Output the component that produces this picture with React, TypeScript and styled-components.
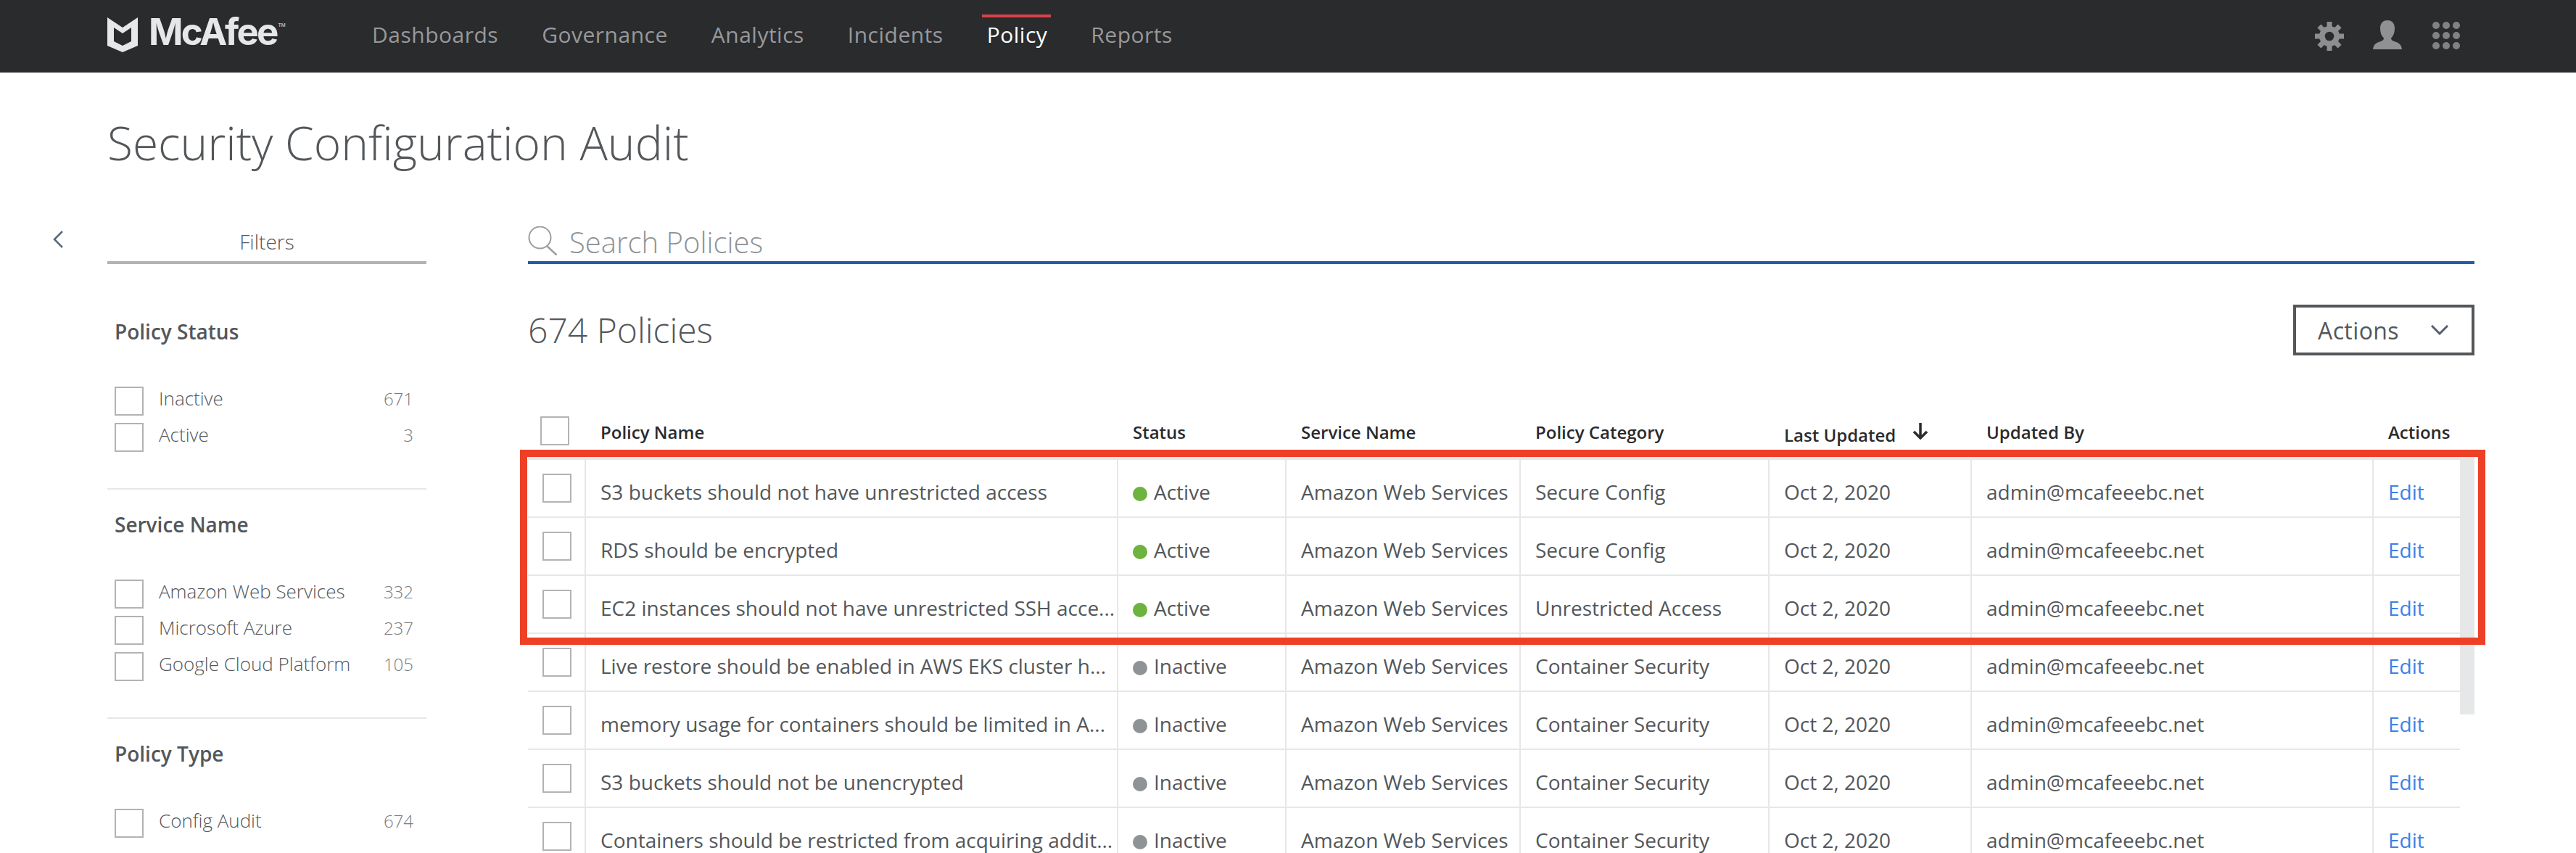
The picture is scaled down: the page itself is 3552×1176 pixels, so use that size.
import React from "react";
import styled, { createGlobalStyle } from "styled-components";

const Global = createGlobalStyle`
  html, body { margin: 0; padding: 0; background: #fff; height: 1176px; overflow: hidden; }
  body { font-family: "Open Sans", "Liberation Sans", sans-serif; color: #53575a; }
  * { box-sizing: border-box; }
`;

const TopBar = styled.header`
  height: 100px;
  background: #2a2b2d;
  display: flex;
  align-items: center;
  padding: 0 160px 0 148px;
`;
const Logo = styled.div`
  display: flex;
  align-items: flex-start;
  flex: none;
  width: 365px;
  height: 48px;
  margin-top: -4px;
  color: #e6e7e8;
`;
const ShieldMark = styled.svg`
  flex: none;
`;
const LogoWord = styled.span`
  font-family: Inter, "Liberation Sans", sans-serif;
  font-weight: 700;
  font-size: 51px;
  line-height: 40px;
  letter-spacing: -2.8px;
  margin-left: 15px;
`;
const LogoMark = styled.span`
  font-family: "Liberation Sans", sans-serif;
  font-size: 7px;
  line-height: 10px;
  margin: 6px 0 0 2px;
`;
const Nav = styled.nav`
  display: flex;
  flex: 1;
  gap: 60px;
  height: 100px;
`;
const NavItem = styled.a<{ $active?: boolean }>`
  font-size: 30px;
  letter-spacing: 0.5px;
  line-height: 96px;
  color: ${(p) => (p.$active ? "#ffffff" : "#98999b")};
  position: relative;
  &::before {
    content: "";
    display: ${(p) => (p.$active ? "block" : "none")};
    position: absolute;
    left: -7px;
    right: -5px;
    top: 20px;
    height: 4px;
    background: #d8434b;
  }
`;
const TopIcons = styled.div`
  display: flex;
  align-items: center;
  gap: 40px;
  margin-top: -4px;
`;
const GearIcon = styled.svg`
  margin-top: 4px;
`;
const AppsIcon = styled.svg`
  margin: 2px 0 0 2px;
`;

const PageTitle = styled.h1`
  margin: 53px 0 71px 148px;
  font-size: 64px;
  line-height: 88px;
  font-weight: 300;
  color: #53575a;
`;
const Columns = styled.div`
  display: flex;
`;
const Collapse = styled.div`
  flex: none;
  padding: 6px 0 0 72px;
  width: 148px;
`;
const Sidebar = styled.aside`
  flex: none;
  width: 440px;
`;
const MainCol = styled.main`
  flex: none;
  width: 2684px;
  margin-left: 140px;
`;
const FiltersTab = styled.div`
  height: 52px;
  border-bottom: 4px solid #b1b3b5;
  text-align: center;
  font-size: 28px;
  font-weight: 300;
  line-height: 42px;
  color: #53575a;
`;
const FilterGroup = styled.section<{ $first?: boolean }>`
  padding: ${(p) => (p.$first ? "73px" : "28px")} 18px 50px 10px;
  border-bottom: 2px solid #e6e7e8;
`;
const FilterHeading = styled.h3`
  margin: 0 0 56px;
  font-size: 28px;
  line-height: 40px;
  font-weight: 600;
  color: #53575a;
`;
const FilterOption = styled.div`
  display: flex;
  align-items: center;
  height: 40px;
  margin-top: 10px;
  font-size: 26px;
  font-weight: 300;
  color: #53575a;
`;
const OptionLabel = styled.span`
  flex: 1;
  margin-left: 21px;
  margin-top: -8px;
`;
const OptionCount = styled.span`
  color: #797c7f;
  font-size: 24px;
  margin-top: -8px;
`;
const Check = styled.span`
  display: block;
  flex: none;
  width: 40px;
  height: 40px;
  border: 2px solid #b1b3b5;
  background: #fff;
`;

const SearchBar = styled.div`
  height: 52px;
  border-bottom: 4px solid #225ea8;
  display: flex;
  align-items: flex-start;
  gap: 17px;
`;
const SearchGlass = styled.svg`
  flex: none;
`;
const SearchText = styled.span`
  font-size: 40px;
  font-weight: 300;
  line-height: 44px;
  color: #8f9396;
`;
const Toolbar = styled.div`
  display: flex;
  align-items: center;
  justify-content: space-between;
  margin-top: 56px;
  height: 70px;
`;
const Count = styled.h2`
  margin: 0;
  font-size: 48px;
  font-weight: 300;
  color: #53575a;
  line-height: 66px;
`;
const ActionsButton = styled.button`
  width: 250px;
  height: 70px;
  border: 4px solid #53575a;
  background: #fff;
  display: flex;
  align-items: center;
  justify-content: space-between;
  padding: 0 32px 0 30px;
  font-family: inherit;
  font-size: 32px;
  letter-spacing: 0.4px;
  color: #53575a;
`;
const TableWrap = styled.div`
  position: relative;
  margin-top: 80px;
`;
const COLS = "80px 734px 232px 323px 343px 279px 554px 119px";
const HeadRow = styled.div`
  display: grid;
  grid-template-columns: ${COLS};
  width: 2664px;
  height: 60px;
`;
const HeadCell = styled.div<{ $low?: boolean }>`
  padding: ${(p) => (p.$low ? "16px" : "12px")} 0 0 20px;
  font-size: 24px;
  line-height: 28px;
  font-weight: 600;
  color: #2a2b2d;
  display: flex;
  align-items: flex-start;
`;
const HeadCheck = styled.div`
  padding: 4px 0 0 17px;
`;
const SortArrow = styled.svg`
  margin: -4px 0 0 22px;
`;
const TableBody = styled.div`
  width: 2664px;
  border-top: 4px solid #e6e7e8;
`;
const Row = styled.div`
  display: grid;
  grid-template-columns: ${COLS};
  height: 80px;
  border-bottom: 2px solid #e6e7e8;
`;
const Cell = styled.div<{ $last?: boolean }>`
  border-right: ${(p) => (p.$last ? "none" : "2px solid #e6e7e8")};
  padding: 15px 0 0 20px;
  font-size: 28px;
  line-height: 58px;
  color: #53575a;
  white-space: nowrap;
`;
const CheckCell = styled.div`
  border-right: 2px solid #e6e7e8;
  padding: 19px 0 0 20px;
`;
const StatusDot = styled.span<{ $active: boolean }>`
  display: inline-block;
  width: 20px;
  height: 20px;
  border-radius: 50%;
  margin-right: 9px;
  vertical-align: -2px;
  background: ${(p) => (p.$active ? "#6db33f" : "#8e9396")};
`;
const EditLink = styled.a`
  color: #3f7fe8;
`;
const ScrollThumb = styled.div`
  position: absolute;
  right: 0;
  top: 60px;
  width: 20px;
  height: 355px;
  background: #e6e7e8;
`;
const Highlight = styled.div`
  position: absolute;
  left: -11px;
  right: -15px;
  top: 50px;
  height: 269px;
  border: 10px solid #ee4026;
  pointer-events: none;
`;

const navItems = ["Dashboards", "Governance", "Analytics", "Incidents", "Policy", "Reports"];

const filters = [
  { title: "Policy Status", options: [["Inactive", "671"], ["Active", "3"]] },
  { title: "Service Name", options: [["Amazon Web Services", "332"], ["Microsoft Azure", "237"], ["Google Cloud Platform", "105"]] },
  { title: "Policy Type", options: [["Config Audit", "674"]] },
];

const rows = [
  ["S3 buckets should not have unrestricted access", true, "Secure Config"],
  ["RDS should be encrypted", true, "Secure Config"],
  ["EC2 instances should not have unrestricted SSH acce...", true, "Unrestricted Access"],
  ["Live restore should be enabled in AWS EKS cluster h...", false, "Container Security"],
  ["memory usage for containers should be limited in A...", false, "Container Security"],
  ["S3 buckets should not be unencrypted", false, "Container Security"],
  ["Containers should be restricted from acquiring addit...", false, "Container Security"],
] as const;

const Shield = () => (
  <ShieldMark width="42" height="48" viewBox="0 0 42 48">
    <path fill="#e6e7e8" fillRule="evenodd" d="M0 0L21 14L42 0V39L21 48L0 39ZM9 14V33L21 39L33 33V14L21 22Z" />
  </ShieldMark>
);

const Gear = () => (
  <GearIcon width="40" height="40" viewBox="0 0 40 40">
    <g fill="#8c8e90">
      {[0, 45, 90, 135, 180, 225, 270, 315].map((a) => (
        <rect key={a} x="16.5" y="0" width="7" height="9" transform={`rotate(${a} 20 20)`} />
      ))}
      <circle cx="20" cy="20" r="14" />
    </g>
    <circle cx="20" cy="20" r="6.3" fill="#2a2b2d" />
  </GearIcon>
);

const User = () => (
  <svg width="40" height="40" viewBox="0 0 40 40">
    <path fill="#8f9193" d="M20 0C26.5 0 30 4.5 30 11C30 17 28.2 21.5 25 24.5C25 27 27 28.2 30 29.3C35 31 39 32.5 40 40H0C1 32.5 5 31 10 29.3C13 28.2 15 27 15 24.5C11.8 21.5 10 17 10 11C10 4.5 13.5 0 20 0Z" />
  </svg>
);

const Apps = () => (
  <AppsIcon width="38" height="38" viewBox="0 0 38 38">
    {[5, 19, 33].flatMap((y) =>
      [5, 19, 33].map((x) => <circle key={`${x}-${y}`} cx={x} cy={y} r="5" fill="#808284" />)
    )}
  </AppsIcon>
);

const SearchIcon = () => (
  <SearchGlass width="40" height="40" viewBox="0 0 40 40">
    <circle cx="16.5" cy="15.5" r="15" fill="none" stroke="#9a9ea1" strokeWidth="2" />
    <path d="M26 27L40 40" fill="none" stroke="#9a9ea1" strokeWidth="2.5" />
  </SearchGlass>
);

export default function App() {
  return (
    <>
      <Global />
      <TopBar>
        <Logo>
          <Shield />
          <LogoWord>McAfee</LogoWord>
          <LogoMark>TM</LogoMark>
        </Logo>
        <Nav>
          {navItems.map((n) => (
            <NavItem key={n} $active={n === "Policy"}>{n}</NavItem>
          ))}
        </Nav>
        <TopIcons>
          <Gear />
          <User />
          <Apps />
        </TopIcons>
      </TopBar>
      <PageTitle>Security Configuration Audit</PageTitle>
      <Columns>
        <Collapse>
          <svg width="15" height="24" viewBox="0 0 15 24">
            <path d="M14 1L3 12L14 23" fill="none" stroke="#56687c" strokeWidth="2.5" />
          </svg>
        </Collapse>
        <Sidebar>
          <FiltersTab>Filters</FiltersTab>
          {filters.map((g, i) => (
            <FilterGroup key={g.title} $first={i === 0}>
              <FilterHeading>{g.title}</FilterHeading>
              {g.options.map(([label, n]) => (
                <FilterOption key={label}>
                  <Check />
                  <OptionLabel>{label}</OptionLabel>
                  <OptionCount>{n}</OptionCount>
                </FilterOption>
              ))}
            </FilterGroup>
          ))}
        </Sidebar>
        <MainCol>
          <SearchBar>
            <SearchIcon />
            <SearchText>Search Policies</SearchText>
          </SearchBar>
          <Toolbar>
            <Count>674 Policies</Count>
            <ActionsButton>
              Actions
              <svg width="24" height="14" viewBox="0 0 24 14">
                <path d="M1 1L12 12L23 1" fill="none" stroke="#56606d" strokeWidth="3" />
              </svg>
            </ActionsButton>
          </Toolbar>
          <TableWrap>
            <HeadRow>
              <HeadCheck><Check /></HeadCheck>
              <HeadCell>Policy Name</HeadCell>
              <HeadCell>Status</HeadCell>
              <HeadCell>Service Name</HeadCell>
              <HeadCell>Policy Category</HeadCell>
              <HeadCell $low>
                Last Updated
                <SortArrow width="24" height="24" viewBox="0 0 24 24">
                  <path d="M12 1V22M3 13L12 22L21 13" fill="none" stroke="#2a2b2d" strokeWidth="3.5" />
                </SortArrow>
              </HeadCell>
              <HeadCell>Updated By</HeadCell>
              <HeadCell>Actions</HeadCell>
            </HeadRow>
            <TableBody>
              {rows.map(([name, active, category], i) => (
                <Row key={i}>
                  <CheckCell><Check /></CheckCell>
                  <Cell>{name}</Cell>
                  <Cell>
                    <StatusDot $active={active} />
                    {active ? "Active" : "Inactive"}
                  </Cell>
                  <Cell>Amazon Web Services</Cell>
                  <Cell>{category}</Cell>
                  <Cell>Oct 2, 2020</Cell>
                  <Cell>admin@mcafeeebc.net</Cell>
                  <Cell $last><EditLink>Edit</EditLink></Cell>
                </Row>
              ))}
            </TableBody>
            <ScrollThumb />
            <Highlight />
          </TableWrap>
        </MainCol>
      </Columns>
    </>
  );
}
